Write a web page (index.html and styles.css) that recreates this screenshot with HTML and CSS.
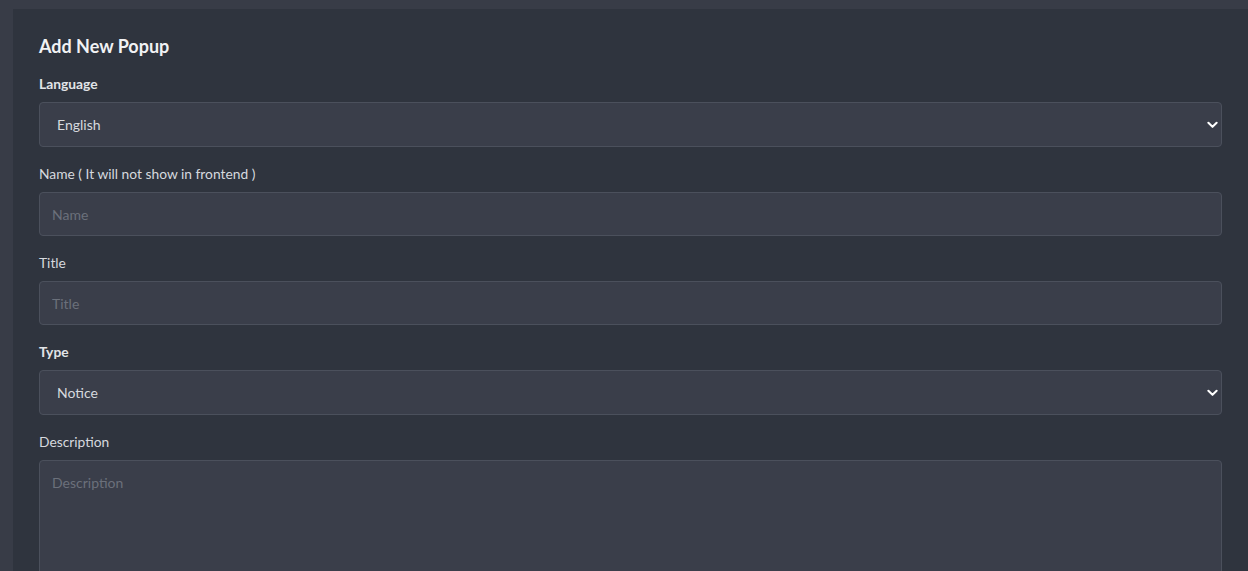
FILE: index.html
```html
<!DOCTYPE html>
<html lang="en">
<head>
<meta charset="utf-8">
<title>Add New Popup</title>
<link rel="stylesheet" href="styles.css">
</head>
<body>
<div class="page">
  <section class="card">
    <h2 class="card-title">Add New Popup</h2>
    <form class="form">
      <div class="field">
        <label class="label label-strong">Language</label>
        <div class="select-wrap">
          <select class="control select">
            <option>English</option>
          </select>
          <svg class="chevron" viewBox="0 0 12 8" width="11" height="8"><path d="M1.5 1.5 L6 6 L10.5 1.5" fill="none" stroke="#ffffff" stroke-width="2.2" stroke-linecap="round" stroke-linejoin="round"/></svg>
        </div>
      </div>
      <div class="field">
        <label class="label">Name ( It will not show in frontend )</label>
        <input class="control input" type="text" placeholder="Name">
      </div>
      <div class="field">
        <label class="label">Title</label>
        <input class="control input" type="text" placeholder="Title">
      </div>
      <div class="field">
        <label class="label label-strong">Type</label>
        <div class="select-wrap">
          <select class="control select">
            <option>Notice</option>
          </select>
          <svg class="chevron" viewBox="0 0 12 8" width="11" height="8"><path d="M1.5 1.5 L6 6 L10.5 1.5" fill="none" stroke="#ffffff" stroke-width="2.2" stroke-linecap="round" stroke-linejoin="round"/></svg>
        </div>
      </div>
      <div class="field">
        <label class="label">Description</label>
        <textarea class="control textarea" placeholder="Description"></textarea>
      </div>
    </form>
  </section>
</div>
</body>
</html>
```

FILE: styles.css
```css
* { box-sizing: border-box; }
html, body {
  margin: 0;
  padding: 0;
  background: #383c47;
  font-family: Lato, "Noto Sans", "Liberation Sans", sans-serif;
  overflow: hidden;
}
.page {
  padding: 9px 0 0 13px;
  height: 571px;
}
.card {
  background: #2f343e;
  padding: 26px 26px 40px 26px;
  min-height: 700px;
}
.card-title {
  margin: 0 0 17px 0;
  font-size: 18px;
  line-height: 22px;
  font-weight: 700;
  color: #f1f2f4;
}
.form {
  display: flex;
  flex-direction: column;
  gap: 17px;
}
.field {
  display: flex;
  flex-direction: column;
  gap: 8px;
}
.label {
  font-size: 13.8px;
  line-height: 20px;
  color: #d6d9de;
  font-weight: 400;
}
.label-strong {
  font-weight: 700;
  color: #e2e4e8;
}
.control {
  width: 100%;
  background: #3a3e4a;
  border: 1px solid #4b505c;
  border-radius: 4px;
  font-family: Lato, "Noto Sans", "Liberation Sans", sans-serif;
  font-size: 14px;
  color: #d6d9de;
  outline: none;
}
.control::placeholder {
  color: #6b707b;
}
.input {
  height: 44px;
  padding: 0 12px;
}
.select-wrap {
  position: relative;
}
.select {
  height: 45px;
  padding: 0 30px 0 17px;
  appearance: none;
  -webkit-appearance: none;
}
.chevron {
  position: absolute;
  right: 4px;
  top: 19px;
}
.textarea {
  height: 150px;
  padding: 13px 12px;
  resize: none;
  line-height: 18px;
}
```
